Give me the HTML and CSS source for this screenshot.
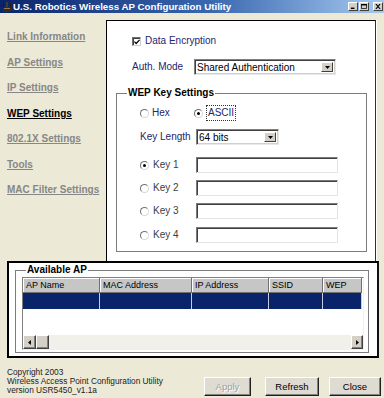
FILE: index.html
```html
<!DOCTYPE html>
<html>
<head>
<meta charset="utf-8">
<link rel="stylesheet" href="styles.css">
</head>
<body>
<div class="window">
  <div class="titlebar">
    <svg class="app-icon" width="10" height="11" viewBox="0 0 10 11">
      <rect x="1" y="5" width="8" height="5" fill="#3a2a1a"/>
      <rect x="2" y="6" width="6" height="1" fill="#8a7a5a"/>
      <rect x="1" y="1" width="1" height="5" fill="#2a1a0a"/>
      <rect x="8" y="1" width="1" height="5" fill="#2a1a0a"/>
      <rect x="4" y="0" width="2" height="5" fill="#4a3a2a"/>
    </svg>
    <span class="title">U.S. Robotics Wireless AP Configuration Utility</span>
    <div class="caption-btns">
      <span class="cbtn"><svg width="8" height="7" viewBox="0 0 8 7"><rect x="1" y="5" width="5" height="2" fill="#000"/></svg></span>
      <span class="cbtn"><svg width="8" height="7" viewBox="0 0 8 7"><rect x="0.5" y="0.5" width="7" height="6" fill="none" stroke="#000"/><rect x="0" y="0" width="8" height="2" fill="#000"/></svg></span>
      <span class="cbtn close"><svg width="8" height="7" viewBox="0 0 8 7"><path d="M1 0 L7 7 M7 0 L1 7" stroke="#000" stroke-width="1.6"/></svg></span>
    </div>
  </div>

  <div class="main">
    <nav class="sidebar">
      <a class="nav-link">Link Information</a>
      <a class="nav-link">AP Settings</a>
      <a class="nav-link">IP Settings</a>
      <a class="nav-link active">WEP Settings</a>
      <a class="nav-link">802.1X Settings</a>
      <a class="nav-link">Tools</a>
      <a class="nav-link">MAC Filter Settings</a>
    </nav>

    <section class="panel">
      <div class="row check-row">
        <span class="checkbox"><svg width="7" height="7" viewBox="0 0 7 7"><path d="M0.5 3 L2.5 5.2 L6.5 1" fill="none" stroke="#000" stroke-width="1.5"/></svg></span>
        <span class="lbl">Data Encryption</span>
      </div>
      <div class="row auth-row">
        <span class="lbl auth-lbl">Auth. Mode</span>
        <div class="select wide">
          <span class="select-text">Shared Authentication</span>
          <span class="select-btn"><svg width="7" height="4" viewBox="0 0 7 4"><path d="M0 0 H7 L3.5 4 Z" fill="#000"/></svg></span>
        </div>
      </div>

      <fieldset class="group wep">
        <legend class="legend">WEP Key Settings</legend>
        <div class="row fmt-row">
          <span class="opt hex"><span class="radio"></span><span class="lbl">Hex</span></span>
          <span class="opt"><span class="radio checked"></span><span class="lbl focus">ASCII</span></span>
        </div>
        <div class="row len-row">
          <span class="lbl lcol">Key Length</span>
          <div class="select short">
            <span class="select-text">64 bits</span>
            <span class="select-btn"><svg width="7" height="4" viewBox="0 0 7 4"><path d="M0 0 H7 L3.5 4 Z" fill="#000"/></svg></span>
          </div>
        </div>
        <div class="row key-row k1">
          <span class="keyopt"><span class="radio checked"></span><span class="klbl">Key 1</span></span>
          <span class="input"></span>
        </div>
        <div class="row key-row k2">
          <span class="keyopt"><span class="radio"></span><span class="klbl">Key 2</span></span>
          <span class="input"></span>
        </div>
        <div class="row key-row k3">
          <span class="keyopt"><span class="radio"></span><span class="klbl">Key 3</span></span>
          <span class="input"></span>
        </div>
        <div class="row key-row k4">
          <span class="keyopt"><span class="radio"></span><span class="klbl">Key 4</span></span>
          <span class="input"></span>
        </div>
      </fieldset>
    </section>
  </div>

  <div class="ap-frame">
    <fieldset class="group ap-group">
      <legend class="legend">Available AP</legend>
      <div class="list">
        <div class="list-head">
          <span class="th c1">AP Name</span>
          <span class="th c2">MAC Address</span>
          <span class="th c3">IP Address</span>
          <span class="th c4">SSID</span>
          <span class="th c5">WEP</span>
        </div>
        <div class="list-row">
          <span class="td c1"></span>
          <span class="td c2"></span>
          <span class="td c3"></span>
          <span class="td c4"></span>
          <span class="td c5"></span>
        </div>
        <div class="list-body"></div>
        <div class="hscroll">
          <span class="sb-btn"><svg width="4" height="7" viewBox="0 0 4 7"><path d="M4 0 V7 L0 3.5 Z" fill="#000"/></svg></span>
          <span class="sb-thumb"></span>
          <span class="sb-track"></span>
          <span class="sb-btn"><svg width="4" height="7" viewBox="0 0 4 7"><path d="M0 0 V7 L4 3.5 Z" fill="#000"/></svg></span>
        </div>
      </div>
    </fieldset>
  </div>

  <footer class="footer">
    <div class="info">
      <div>Copyright 2003</div>
      <div>Wireless Access Point Configuration Utility</div>
      <div>version USR5450_v1.1a</div>
    </div>
    <div class="buttons">
      <button class="btn apply" disabled>Apply</button>
      <button class="btn refresh">Refresh</button>
      <button class="btn closeb">Close</button>
    </div>
  </footer>
</div>
</body>
</html>
```

FILE: styles.css
```css
* { box-sizing: border-box; }
html, body { margin: 0; padding: 0; }
body { background: #ece9d6; font-family: "Liberation Sans", Arial, sans-serif; }

.window {
  width: 384px;
  height: 398px;
  background: #ece9d6;
  overflow: hidden;
  display: flex;
  flex-direction: column;
}

/* title bar */
.titlebar {
  height: 13px;
  flex: none;
  display: flex;
  align-items: center;
  background: linear-gradient(to right, #0a246a 0%, #3a68b0 55%, #a6caf0 100%);
}
.app-icon { margin-left: 2px; margin-top: 1px; flex: none; }
.title {
  margin-left: 1px;
  color: #fff;
  font-weight: bold;
  font-size: 9.75px;
  line-height: 13px;
  white-space: nowrap;
}
.caption-btns { margin-left: auto; display: flex; align-items: center; margin-right: 1px; }
.cbtn {
  width: 10px; height: 9px;
  background: #d4d0c8;
  border: 1px solid;
  border-color: #fff #404040 #404040 #fff;
  display: flex; align-items: center; justify-content: center;
  margin-left: 1px;
}
.cbtn svg { width: 6px; height: 5px; }
.cbtn.close { margin-left: 4px; }

/* main */
.main { display: flex; height: 248px; flex: none; }
.sidebar {
  width: 106px;
  flex: none;
  display: flex;
  flex-direction: column;
  padding-top: 11px;
}
.nav-link {
  display: block;
  padding-left: 7px;
  font-weight: bold;
  font-size: 10px;
  line-height: 25.5px;
  height: 25.5px;
  color: #878787;
  text-decoration: underline;
  white-space: nowrap;
}
.nav-link.active { color: #000; }

.panel {
  margin-top: 7px;
  width: 270px;
  height: 241px;
  background: #fff;
  border-top: 1px solid #000;
  border-left: 1px solid #000;
  border-right: 1px solid #303030;
  box-shadow: 1px 0 0 #fff;
  padding: 12px 0 0 9px;
  overflow: hidden;
}

.row { display: flex; align-items: center; height: 16px; }
.lbl { font-size: 10px; color: #25256e; white-space: nowrap; line-height: 12px; }

.check-row { margin-left: 16px; }
.checkbox {
  width: 9px; height: 9px;
  border: 1px solid;
  border-color: #707070 #d0d0d0 #d0d0d0 #707070;
  box-shadow: inset 1px 1px 0 #404040;
  background: #fff;
  display: flex; align-items: center; justify-content: center;
  margin-right: 4px;
}
.checkbox svg { width: 6px; height: 6px; margin: 1px 0 0 1px; }

.auth-row { margin-top: 10px; margin-left: 16px; }
.auth-lbl { width: 62px; }

.select {
  display: flex;
  align-items: stretch;
  height: 16px;
  border: 1px solid;
  border-color: #808080 #e8e8e8 #e8e8e8 #808080;
  box-shadow: inset 1px 1px 0 #404040, inset -1px -1px 0 #d4d0c8;
  background: #fff;
  padding: 2px;
}
.select.wide { width: 142px; }
.select.short { width: 83px; }
.select-text {
  flex: 1;
  font-size: 10px;
  line-height: 12px;
  color: #000;
  white-space: nowrap;
}
.select-btn {
  width: 12px;
  background: #d4d0c8;
  border: 1px solid;
  border-color: #fff #404040 #404040 #fff;
  display: flex; align-items: center; justify-content: center;
}
.select-btn svg { width: 5px; height: 3px; }

/* group boxes */
.group {
  margin: 0;
  padding: 0;
  border: 1px solid #7c7c7c;
  min-width: 0;
}
.legend {
  margin-left: 10px;
  padding: 0 1px;
  font-weight: bold;
  font-size: 10px;
  line-height: 12px;
  color: #000;
}

.wep {
  margin-top: 12px;
  width: 251px;
  padding-bottom: 8px;
}
.fmt-row { margin-top: 6px; margin-left: 23px; }
.opt { display: flex; align-items: center; }
.opt.hex { width: 54px; }
.radio {
  width: 9px; height: 9px;
  border-radius: 50%;
  border: 1px solid;
  border-color: #707070 #d8d8d8 #d8d8d8 #707070;
  background: #fff;
  display: inline-block;
  position: relative;
  margin-right: 3px;
  flex: none;
}
.radio.checked::after {
  content: "";
  position: absolute;
  left: 2px; top: 2px;
  width: 3px; height: 3px;
  border-radius: 50%;
  background: #000;
}
.focus { outline: 1px dotted #333; padding: 1px 1px; margin-left: 1px; }

.len-row { margin-top: 8px; margin-left: 23px; }
.lcol { width: 56px; }

.key-row { margin-left: 23px; }
.k1 { margin-top: 12px; }
.k2 { margin-top: 7px; }
.k3 { margin-top: 7px; }
.k4 { margin-top: 8px; }
.keyopt { width: 56px; display: flex; align-items: center; }
.keyopt .radio { margin-right: 4px; }
.klbl { font-size: 10px; color: #3c3c44; line-height: 12px; }
.input {
  width: 142px; height: 16px;
  border: 1px solid;
  border-color: #7a7a7a #e4e4e4 #e4e4e4 #7a7a7a;
  box-shadow: inset 1px 1px 0 #404040;
  background: #fff;
}

/* available AP */
.ap-frame {
  flex: none;
  margin-left: 7px;
  width: 372px;
  height: 97px;
  background: #fff;
  border: 2px solid #000;
  border-right-color: #101010;
  padding-top: 1px;
}
.ap-group {
  margin-left: 6px;
  width: 354px;
  padding-bottom: 2px;
}
.list {
  margin: 1px 0 0 6px;
  width: 342px;
  border: 1px solid;
  border-color: #808080 #f0f0f0 #f0f0f0 #808080;
  background: #fff;
}
.list-head, .list-row { display: flex; }
.c1 { width: 77px; }
.c2 { width: 92px; }
.c3 { width: 77px; }
.c4 { width: 54px; }
.c5 { width: 39px; }
.th {
  height: 15px;
  background: #c6c6c6;
  border-right: 1px solid #707070;
  border-bottom: 1px solid #707070;
  box-shadow: inset 1px 1px 0 #fff;
  font-size: 9px;
  line-height: 14px;
  padding-left: 3px;
  color: #000;
  white-space: nowrap;
}
.td {
  height: 16px;
  background: #0a246a;
  border-right: 1px solid #c8cce0;
}
.list-body { height: 26px; }
.hscroll {
  display: flex;
  height: 14px;
  background: #f1f0ea;
}
.sb-btn {
  width: 13px;
  height: 14px;
  background: #d4d0c8;
  border: 1px solid;
  border-color: #fff #404040 #404040 #fff;
  box-shadow: inset -1px -1px 0 #808080;
  display: flex; align-items: center; justify-content: center;
}
.sb-btn:last-child { width: 12px; }
.sb-btn svg { width: 3px; height: 5px; }
.sb-thumb {
  width: 13px;
  height: 14px;
  background: #d4d0c8;
  border: 1px solid;
  border-color: #fff #404040 #404040 #fff;
  box-shadow: inset -1px -1px 0 #808080;
}
.sb-track { flex: 1; }

/* footer */
.footer {
  flex: 1;
  display: flex;
  padding-left: 7px;
}
.info {
  padding-top: 10px;
  font-size: 8.3px;
  line-height: 9px;
  color: #222;
  white-space: nowrap;
}
.buttons {
  margin-left: auto;
  margin-right: 3px;
  margin-top: 19px;
  display: flex;
  align-items: flex-start;
}
.btn {
  height: 19px;
  padding: 0;
  font-family: "Liberation Sans", Arial, sans-serif;
  font-size: 9.5px;
  font-weight: normal;
  color: #000;
  background: #dedbd2;
  border: 1px solid;
  border-color: #fff #202020 #202020 #fff;
  box-shadow: inset -1px -1px 0 #808080;
  border-radius: 0;
}
.apply { width: 47px; color: #a0a0a0; text-shadow: 1px 1px 0 #fff; }
.refresh { width: 54px; margin-left: 14px; }
.closeb { width: 52px; margin-left: 10px; }
```
